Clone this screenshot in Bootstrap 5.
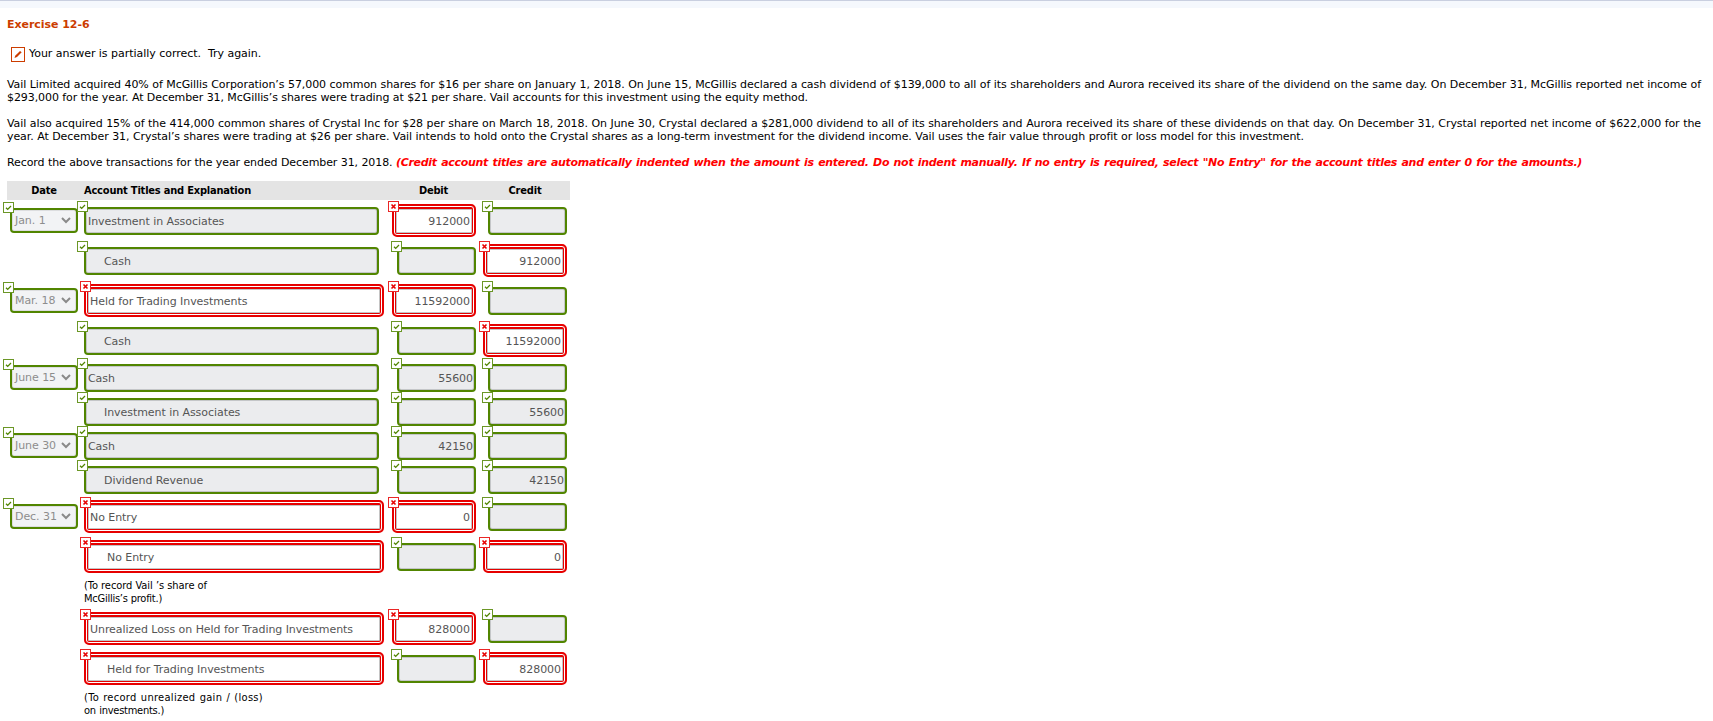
<!DOCTYPE html>
<html lang="en">
<head>
  <meta charset="UTF-8" />
  <meta name="viewport" content="width=device-width, initial-scale=1" />
  <title>Exercise 12-6</title>
  <link href="https://cdn.jsdelivr.net/npm/bootstrap@5.3.3/dist/css/bootstrap.min.css" rel="stylesheet">
  <style>
    body {
      font-family: "DejaVu Sans", Verdana, sans-serif;
      font-size: 11px;
      line-height: 13px;
      color: #000;
      background-color: #fff;
      overflow: hidden;
    }
    .top-strip {
      height: 8px;
      border-top: 1px solid #c9cfe0;
      background-color: #f5f8fd;
    }
    .exercise {
      padding: 10px 12px 0 7px;
    }
    .exercise-title {
      font-size: 11px;
      line-height: 13px;
      font-weight: bold;
      color: #cc3d00;
      letter-spacing: -.05px;
      margin-bottom: 13px;
    }
    .result {
      height: 20px;
      padding-left: 4px;
      margin-bottom: 14px;
      letter-spacing: -.03px;
    }
    .result svg {
      margin-right: 4px;
    }
    .result span {
      margin-bottom: 1px;
    }
    /* one block per printed line, stretched to its measured width */
    .text-line {
      display: block;
      white-space: nowrap;
      text-align: justify;
      text-align-last: justify;
    }
    .problem-text {
      margin-bottom: 13px;
      letter-spacing: -.08px;
    }
    .w-a1 { width: 1694px; }
    .w-a2 { width: 801px; }
    .w-b1 { width: 1694px; }
    .w-b2 { width: 1297px; }
    .w-c1 { width: 384px; }
    .w-c2 { width: 1186px; }
    .w-n1 { width: 123px; letter-spacing: -.05px; }
    .w-n2 { width: 78px; letter-spacing: -.25px; }
    .w-n3 { width: 179px; letter-spacing: .3px; }
    .w-n4 { width: 80px; letter-spacing: -.25px; }
    .hint {
      color: #f00;
      font-weight: bold;
      font-style: italic;
      letter-spacing: -.3px;
      margin-left: 5px;
    }
    .journal {
      width: 563px;
      margin-top: -1px;
    }
    .journal-row {
      display: grid;
      grid-template-columns: 77px 300px 92px 91px;
      height: 40px;
      align-items: center;
    }
    .journal-row.tight {
      height: 34px;
    }
    .journal-head {
      height: 19px;
      background-color: #e4e4e4;
      font-family: "DejaVu Sans Condensed", "DejaVu Sans", sans-serif;
      font-weight: bold;
      letter-spacing: -.2px;
      margin-bottom: 1px;
    }
    .head-date { padding-right: 3px; }
    .head-amount { padding-left: 7px; }
    .entry {
      position: relative;
      height: 28px;
      border: 2px solid #518500;
      border-radius: 4px;
      background-color: #ebecee;
      box-shadow: inset 0 0 0 1px #c4c6c8;
      color: #555;
      letter-spacing: -.06px;
      line-height: 25px;
      white-space: nowrap;
    }
    .entry.title { width: 295px; padding-left: 2px; }
    .entry.amount { width: 79px; padding-right: 1px; text-align: right; justify-self: end; }
    .entry.date {
      width: 68px;
      height: 25px;
      margin-left: 3px;
      margin-bottom: 1px;
      padding: 0 5px 0 3px;
      line-height: 21px;
      color: #8d8d8d;
      background-color: #f2f3f5;
      box-shadow: inset 0 0 0 1px #dcdddf;
    }
    .entry.indent { padding-left: 18px; }
    .entry.wrong {
      height: 33px;
      margin-bottom: 1px;
      background-color: #fff;
      border-color: #e60000;
      border-radius: 5px;
      box-shadow: inset 0 0 0 1px #fff, inset 0 0 0 2px #e60000, inset 0 1px 0 2px #e60000,
        inset 0 0 0 3px #c4c4c4, inset 0 1px 0 3px #c4c4c4;
      line-height: 31px;
    }
    .entry.wrong.title { width: 300px; padding-left: 4px; }
    .entry.wrong.title.indent { padding-left: 21px; }
    .entry.wrong.amount { width: 84px; padding-right: 4px; }
    .flag {
      position: absolute;
      left: -9px;
      top: -8px;
      width: 11px;
      height: 11px;
      background-color: #fff;
    }
    .amount .flag { left: -8px; }
    .wrong .flag { left: -6px; top: -5px; }
    .note {
      height: 32px;
      padding: 2px 0 0 77px;
      font-family: "DejaVu Sans Condensed", "DejaVu Sans", sans-serif;
    }
  </style>
</head>
<body>

<div class="top-strip"></div>

<div class="exercise">
  <h1 class="exercise-title">Exercise 12-6</h1>

  <div class="result d-flex align-items-center">
    <svg width="14" height="15" viewBox="0 0 14 15">
      <rect x=".5" y=".5" width="13" height="14" fill="#fff" stroke="#cc3d00" />
      <path d="M3.500 11l.7-2.300 4.800-4.700 1.700 1.300-4.700 4.700z" fill="#cc3d00" />
    </svg>
    <span>Your answer is partially correct.&nbsp; Try again.</span>
  </div>

  <div class="problem-text">
    <span class="text-line w-a1">Vail Limited acquired 40% of McGillis Corporation’s 57,000 common shares for $16 per share on January 1, 2018. On June 15, McGillis declared a cash dividend of $139,000 to all of its shareholders and Aurora received its share of the dividend on the same day. On December 31, McGillis reported net income of</span>
    <span class="text-line w-a2">$293,000 for the year. At December 31, McGillis’s shares were trading at $21 per share. Vail accounts for this investment using the equity method.</span>
  </div>
  <div class="problem-text">
    <span class="text-line w-b1">Vail also acquired 15% of the 414,000 common shares of Crystal Inc for $28 per share on March 18, 2018. On June 30, Crystal declared a $281,000 dividend to all of its shareholders and Aurora received its share of these dividends on that day. On December 31, Crystal reported net income of $622,000 for the</span>
    <span class="text-line w-b2">year. At December 31, Crystal’s shares were trading at $26 per share. Vail intends to hold onto the Crystal shares as a long-term investment for the dividend income. Vail uses the fair value through profit or loss model for this investment.</span>
  </div>
  <div class="problem-text d-flex">
    <span class="text-line w-c1">Record the above transactions for the year ended December 31, 2018.</span>
    <span class="text-line w-c2 hint">(Credit account titles are automatically indented when the amount is entered. Do not indent manually. If no entry is required, select "No Entry" for the account titles and enter 0 for the amounts.)</span>
  </div>

  <div class="journal" id="journal">
    <div class="journal-row journal-head">
      <div class="head-date text-center">Date</div>
      <div>Account Titles and Explanation</div>
      <div class="head-amount text-center">Debit</div>
      <div class="head-amount text-center">Credit</div>
    </div>
  </div>
</div>

<script src="https://cdn.jsdelivr.net/npm/bootstrap@5.3.3/dist/js/bootstrap.bundle.min.js"></script>
<script>
// "!" in front of a value marks a wrong answer, ">" an indented title
const rows = [
  { date: 'Jan. 1', title: 'Investment in Associates', debit: '!912000', credit: '' },
  { title: '>Cash', debit: '', credit: '!912000' },
  { date: 'Mar. 18', title: '!Held for Trading Investments', debit: '!11592000', credit: '' },
  { title: '>Cash', debit: '', credit: '!11592000' },
  { date: 'June 15', title: 'Cash', debit: '55600', credit: '', tight: true },
  { title: '>Investment in Associates', debit: '', credit: '55600', tight: true },
  { date: 'June 30', title: 'Cash', debit: '42150', credit: '', tight: true },
  { title: '>Dividend Revenue', debit: '', credit: '42150', tight: true },
  { date: 'Dec. 31', title: '!No Entry', debit: '!0', credit: '' },
  { title: '!>No Entry', debit: '', credit: '!0' },
  { note: [['w-n1', '(To record Vail ’s share of'], ['w-n2', 'McGillis’s profit.)']] },
  { title: '!Unrealized Loss on Held for Trading Investments', debit: '!828000', credit: '' },
  { title: '!>Held for Trading Investments', debit: '', credit: '!828000' },
  { note: [['w-n3', '(To record unrealized gain / (loss)'], ['w-n4', 'on investments.)']] }
];

function flag(wrong) {
  const color = wrong ? '#e60000' : '#518500';
  const mark = wrong ? 'M3.500 3.500l4 4M7.500 3.500l-4 4' : 'M3 5.700l1.700 1.700L8 4';
  return `<svg class="flag" viewBox="0 0 11 11" fill="none" stroke="${color}">
    <rect x=".5" y=".5" width="10" height="10" stroke-opacity=".85" />
    <path d="${mark}" stroke-width="${wrong ? 1.6 : 1.3}" />
  </svg>`;
}

function entry(type, value) {
  const wrong = value.startsWith('!');
  const indent = value.includes('>');
  const text = value.replace(/[!>]/g, '');
  return `<div class="entry ${type} ${wrong ? 'wrong' : ''} ${indent ? 'indent' : ''}">${text}${flag(wrong)}</div>`;
}

function dateEntry(value) {
  return `<div class="entry date d-flex justify-content-between align-items-center">
    <span>${value}</span>
    <svg width="10" height="7" viewBox="0 0 10 7" fill="none" stroke="#8a8a8a" stroke-width="2"><path d="M1 1l4 4 4-4" /></svg>
    ${flag(false)}
  </div>`;
}

document.getElementById('journal').innerHTML += rows.map(row => {
  if (row.note) {
    return `<div class="note">${row.note.map(([width, text]) => `<span class="text-line ${width}">${text}</span>`).join('')}</div>`;
  }
  return `<div class="journal-row ${row.tight ? 'tight' : ''}">
    ${row.date ? dateEntry(row.date) : '<div></div>'}
    ${entry('title', row.title)}
    ${entry('amount', row.debit)}
    ${entry('amount', row.credit)}
  </div>`;
}).join('');
</script>

</body>
</html>
